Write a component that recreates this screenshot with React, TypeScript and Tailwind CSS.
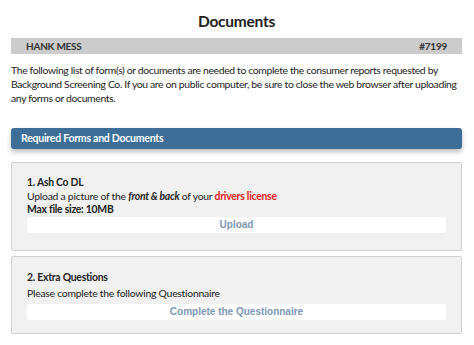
import React from 'react';

const lato = { fontFamily: 'Lato, "Open Sans", sans-serif' };
const arial = { fontFamily: '"Liberation Sans", Arial, sans-serif' };

export default function App(): React.ReactElement {
  return (
    <div className="w-[474px] h-[345px] bg-white overflow-hidden pl-[11px] pr-[12px] tracking-[-0.25px]" style={lato}>
      <h2 className="text-center font-bold text-[15.5px] leading-[20px] pt-[11px] text-[#222]">Documents</h2>
      <div className="mt-[7px] h-[16px] bg-[#cccccc] flex items-center justify-between px-[15px] text-[10px] font-bold text-[#333]">
        <span>HANK MESS</span>
        <span>#7199</span>
      </div>
      <p className="mt-[9px] text-[10.4px] leading-[14px] tracking-[-0.35px] text-[#222]">
        The following list of form(s) or documents are needed to complete the consumer reports requested by
        Background Screening Co. If you are on public computer, be sure to close the web browser after uploading
        any forms or documents.
      </p>

      <div className="mt-[23px] h-[21px] bg-[#3d6e97] rounded-[3px] shadow-[0_3px_5px_rgba(0,0,0,0.25)] flex items-center px-[10px] text-[10.5px] font-bold text-white">
        Required Forms and Documents
      </div>

      <div className="mt-[13px] flex flex-col gap-[5px] text-[10.4px] text-[#222]">
        <div className="bg-[#f1f1f1] border border-[#d0d0d0] rounded-[2px] px-[15px] pt-[12px] pb-[17px]">
          <h4 className="font-bold h-[14px] leading-[14px]">1. Ash Co DL</h4>
          <div className="mt-[1px] h-[13px] leading-[13px]">
            Upload a picture of the <i className="font-bold">front &amp; back</i> of your{' '}
            <span className="font-bold text-[#e02020]">drivers license</span>
          </div>
          <div className="h-[12px] leading-[12px] font-bold">Max file size: 10MB</div>
          <button
            className="mt-[2px] block w-full h-[16px] bg-white rounded-[3px] text-[10px] leading-[16px] font-bold text-[#7d97b4] tracking-normal"
            style={arial}
          >
            Upload
          </button>
        </div>
        <div className="bg-[#f1f1f1] border border-[#d0d0d0] rounded-[2px] px-[15px] pt-[13px] pb-[13px]">
          <h4 className="font-bold h-[14px] leading-[14px]">2. Extra Questions</h4>
          <div className="mt-[3px] h-[13px] leading-[13px]">Please complete the following Questionnaire</div>
          <button
            className="mt-[4px] block w-full h-[16px] bg-white rounded-[3px] text-[10px] leading-[16px] font-bold text-[#7d97b4] tracking-normal"
            style={arial}
          >
            Complete the Questionnaire
          </button>
        </div>
      </div>
    </div>
  );
}
